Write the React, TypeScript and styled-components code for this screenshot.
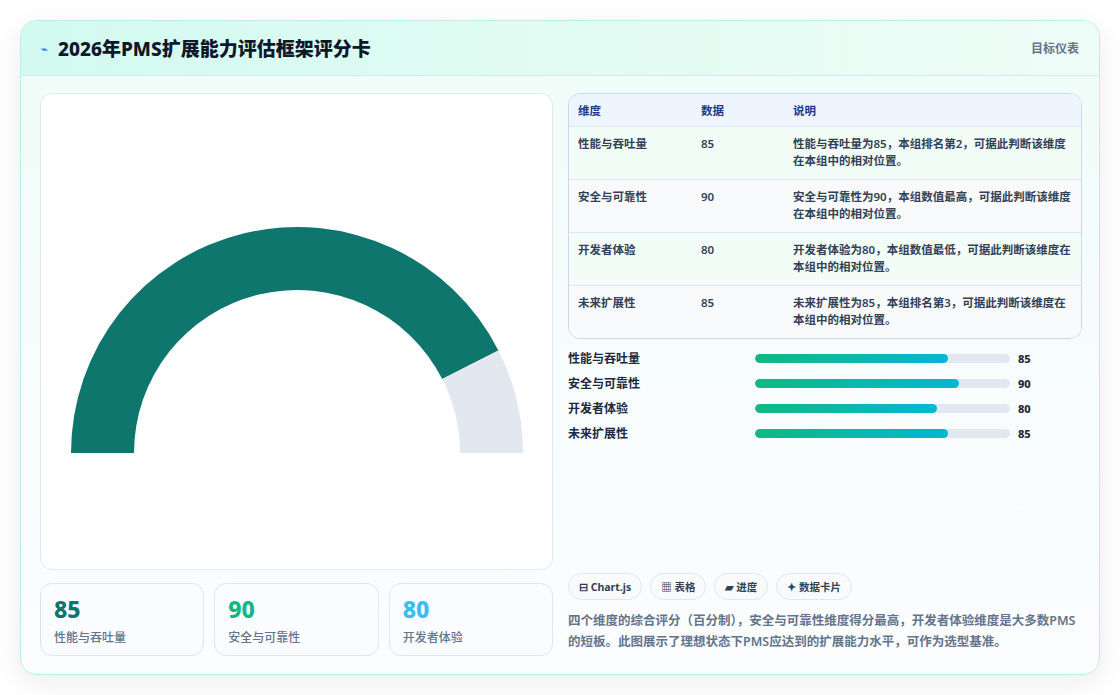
import React from "react";
import styled, { createGlobalStyle } from "styled-components";

const Global = createGlobalStyle`
  html, body { margin: 0; padding: 0; background: #fff; }
  body { font-family: "Noto Sans", "Noto Sans CJK SC", sans-serif; color: #1e293b; }
`;

const Page = styled.div`
  width: 1120px; height: 695px; box-sizing: border-box; padding: 20px;
`;
const Card = styled.div`
  height: 655px; box-sizing: border-box; border: 1px solid #bdeee4; border-radius: 16px;
  background: linear-gradient(180deg, #effdf8 0%, #f8fcfd 60%, #fbfdff 100%);
  box-shadow: 0 8px 28px rgba(15, 23, 42, 0.08); overflow: hidden;
  display: flex; flex-direction: column;
`;
const Header = styled.div`
  height: 55px; box-sizing: border-box; display: flex; align-items: center; justify-content: space-between;
  padding: 0 20px; background: linear-gradient(90deg, #d2faf0 0%, #e4fcf3 60%, #effdf7 100%);
  border-bottom: 1px solid #cdeef0;
`;
const Title = styled.h1`
  margin: 0; font-size: 19px; font-weight: 800; color: #0f172a; display: flex; align-items: center; gap: 10px;
`;
const Bolt = styled.span`color: #3b82f6; font-size: 11px;`;
const HeadRight = styled.span`font-size: 12px; color: #64748b; font-weight: 600;`;
const Body = styled.div`
  flex: 1; display: grid; grid-template-columns: 513px 514px; gap: 15px; padding: 17px 19px 18px 19px;
`;
const Col = styled.div`display: flex; flex-direction: column; min-height: 0;`;
const GaugePanel = styled.div`
  height: 477px; box-sizing: border-box; background: #fff; border: 1px solid #e2e8f0; border-radius: 12px;
  display: flex; overflow: hidden;
`;
const Stats = styled.div`display: grid; grid-template-columns: repeat(3, 1fr); gap: 10px; margin-top: 13px;`;
const Stat = styled.div`
  height: 73px; box-sizing: border-box; border: 1px solid #dbe7f3; border-radius: 12px; background: #fafcff;
  padding: 12px 13px;
`;
const StatNum = styled.div<{ c: string }>`font-size: 23px; font-weight: 800; color: ${p => p.c}; line-height: 26px;`;
const StatLabel = styled.div`font-size: 12px; color: #64748b; margin-top: 6px; font-weight: 500;`;
const Table = styled.div`
  border: 1px solid #cbd8e8; border-radius: 12px; overflow: hidden; background: #fff;
`;
const Row = styled.div<{ head?: boolean; alt?: boolean }>`
  display: grid; grid-template-columns: 123px 92px 1fr; padding: 0 9px;
  height: ${p => (p.head ? "32px" : "53px")}; box-sizing: border-box;
  align-items: ${p => (p.head ? "center" : "start")};
  padding-top: ${p => (p.head ? "0" : "8px")};
  background: ${p => (p.head ? "#eef5fe" : p.alt ? "#f8fafc" : "#f1fdf6")};
  border-top: ${p => (p.head ? "none" : "1px solid #dfe7f0")};
  font-size: 11.5px; font-weight: ${p => (p.head ? 700 : 600)};
  color: ${p => (p.head ? "#1e3a8a" : "#334155")}; line-height: 17px;
`;
const Bars = styled.div`display: flex; flex-direction: column; gap: 8px; margin-top: 10px;`;
const BarRow = styled.div`display: grid; grid-template-columns: 187px 255px 1fr; gap: 0; align-items: center; height: 17px;`;
const BarLabel = styled.span`font-size: 12px; font-weight: 600; color: #1e293b;`;
const Track = styled.div`height: 9px; border-radius: 5px; background: #e2e8f0; overflow: hidden;`;
const Fill = styled.div`height: 100%; border-radius: 5px; background: linear-gradient(90deg, #10b981, #06b6d4);`;
const BarVal = styled.span`font-size: 11px; font-weight: 800; color: #1e293b; padding-left: 8px;`;
const Spacer = styled.div`flex: 1;`;
const Chips = styled.div`display: flex; gap: 8px;`;
const Chip = styled.span`
  height: 27px; box-sizing: border-box; padding: 0 10px; border: 1px solid #dfe7f0; border-radius: 14px; background: #f8fafc;
  font-size: 10.5px; font-weight: 700; color: #334155; display: flex; align-items: center; gap: 3px;
`;
const Desc = styled.p`
  margin: 10px 0 4px 0; font-size: 12.5px; line-height: 21px; font-weight: 600; color: #64748b;
`;

const rows = [
  ["性能与吞吐量", "85", "性能与吞吐量为85，本组排名第2，可据此判断该维度在本组中的相对位置。"],
  ["安全与可靠性", "90", "安全与可靠性为90，本组数值最高，可据此判断该维度在本组中的相对位置。"],
  ["开发者体验", "80", "开发者体验为80，本组数值最低，可据此判断该维度在本组中的相对位置。"],
  ["未来扩展性", "85", "未来扩展性为85，本组排名第3，可据此判断该维度在本组中的相对位置。"],
];

function arc(cx: number, cy: number, ro: number, ri: number, a0: number, a1: number) {
  const p = (r: number, a: number) => [cx + r * Math.cos(a), cy - r * Math.sin(a)];
  const [x0, y0] = p(ro, a0), [x1, y1] = p(ro, a1), [x2, y2] = p(ri, a1), [x3, y3] = p(ri, a0);
  return `M${x0} ${y0} A${ro} ${ro} 0 0 1 ${x1} ${y1} L${x2} ${y2} A${ri} ${ri} 0 0 0 ${x3} ${y3} Z`;
}

export default function App() {
  const cx = 256, cy = 359, ro = 226, ri = 163;
  const split = Math.PI * (1 - 0.85);
  return (
    <Page>
      <Global />
      <Card>
        <Header>
          <Title><Bolt>⌁</Bolt>2026年PMS扩展能力评估框架评分卡</Title>
          <HeadRight>目标仪表</HeadRight>
        </Header>
        <Body>
          <Col>
            <GaugePanel>
              <svg width="511" height="475" viewBox="0 0 511 475">
                <path d={arc(cx, cy, ro, ri, Math.PI, split)} fill="#0f766e" />
                <path d={arc(cx, cy, ro, ri, split, 0)} fill="#e2e8f0" />
              </svg>
            </GaugePanel>
            <Stats>
              <Stat><StatNum c="#0f766e">85</StatNum><StatLabel>性能与吞吐量</StatLabel></Stat>
              <Stat><StatNum c="#10b981">90</StatNum><StatLabel>安全与可靠性</StatLabel></Stat>
              <Stat><StatNum c="#38bdf8">80</StatNum><StatLabel>开发者体验</StatLabel></Stat>
            </Stats>
          </Col>
          <Col>
            <Table>
              <Row head><span>维度</span><span>数据</span><span>说明</span></Row>
              {rows.map((r, i) => (
                <Row key={r[0]} alt={i % 2 === 1}><span>{r[0]}</span><span>{r[1]}</span><span>{r[2]}</span></Row>
              ))}
            </Table>
            <Bars>
              {rows.map(r => (
                <BarRow key={r[0]}>
                  <BarLabel>{r[0]}</BarLabel>
                  <Track><Fill style={{ width: `${Number(r[1]) * 0.89}%` }} /></Track>
                  <BarVal>{r[1]}</BarVal>
                </BarRow>
              ))}
            </Bars>
            <Spacer />
            <Chips>
              <Chip>⊟ Chart.js</Chip>
              <Chip>▦ 表格</Chip>
              <Chip>▰ 进度</Chip>
              <Chip>✦ 数据卡片</Chip>
            </Chips>
            <Desc>四个维度的综合评分（百分制），安全与可靠性维度得分最高，开发者体验维度是大多数PMS的短板。此图展示了理想状态下PMS应达到的扩展能力水平，可作为选型基准。</Desc>
          </Col>
        </Body>
      </Card>
    </Page>
  );
}
